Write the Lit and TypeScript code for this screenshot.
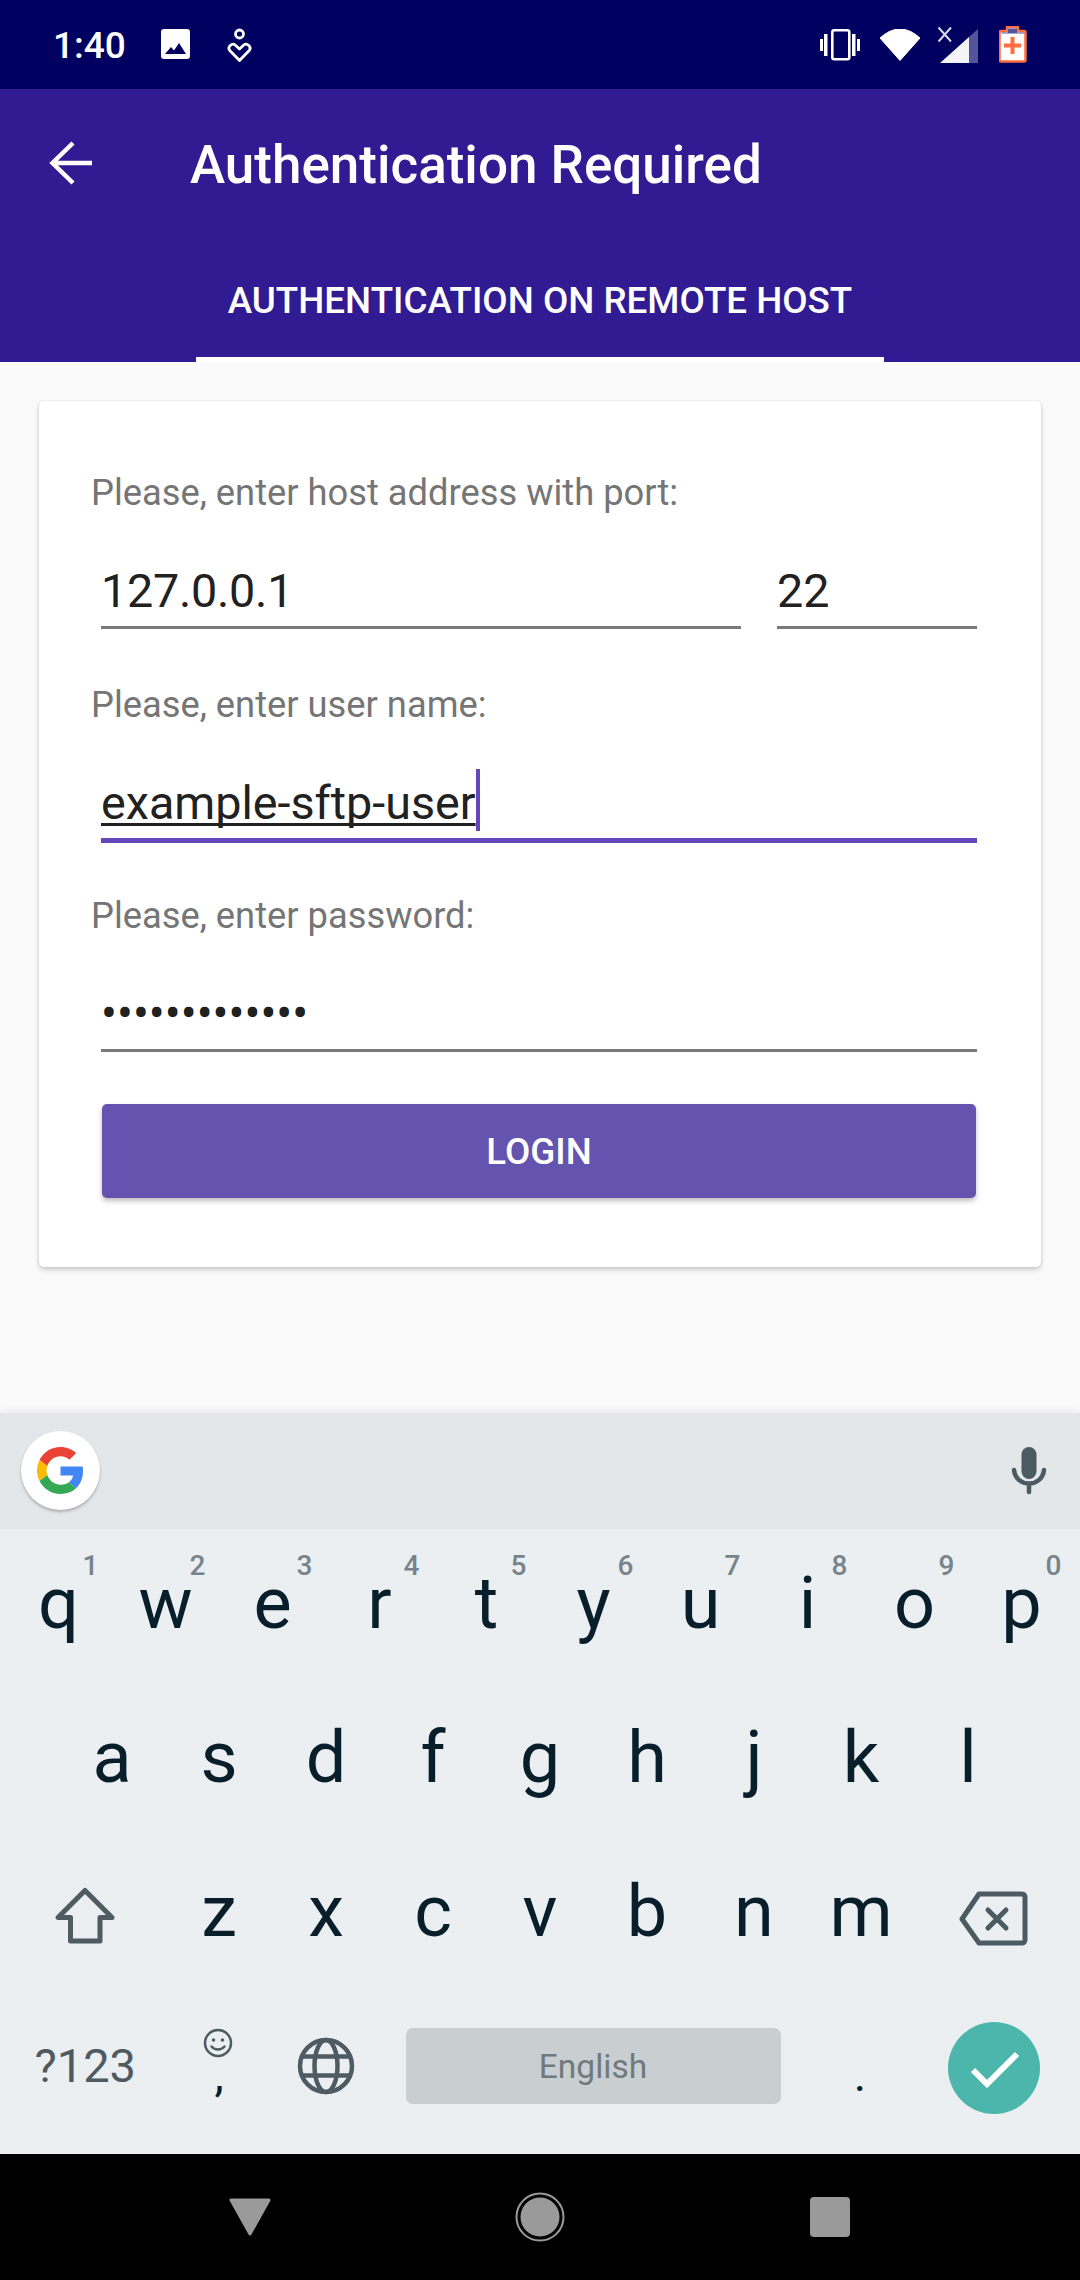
import { LitElement, css, html } from "lit";
import { customElement } from "lit/decorators.js";

const ROW_ONE = ["q", "w", "e", "r", "t", "y", "u", "i", "o", "p"];
const HINTS = ["1", "2", "3", "4", "5", "6", "7", "8", "9", "0"];
const ROW_TWO = ["a", "s", "d", "f", "g", "h", "j", "k", "l"];
const ROW_THREE = ["z", "x", "c", "v", "b", "n", "m"];

/**
 * Login screen with the on-screen keyboard below it.
 */
@customElement("app-root")
class AppRoot extends LitElement {
    public static styles = css`
        :host {
            display: flex;
            flex-direction: column;
            width: 1080px;
            height: 2280px;
            overflow: hidden;
            font-family: Roboto, "Liberation Sans", sans-serif;
            background: #fafafa;
        }

        * {
            box-sizing: border-box;
        }

        svg {
            display: block;
            flex: none;
        }

        .status {
            height: 89px;
            flex: none;
            display: flex;
            align-items: center;
            padding: 0 53px 0 53px;
            background: #000060;
            color: #fff;
        }

        .time {
            font-size: 37px;
            font-weight: 500;
            line-height: 89px;
            margin-right: 35px;
            position: relative;
            top: 1px;
        }

        .status .gap-left {
            margin-right: 37px;
            margin-bottom: 1px;
        }

        .status-right {
            margin-left: auto;
            display: flex;
            align-items: center;
        }

        .appbar {
            height: 273px;
            flex: none;
            background: #311b92;
            color: #fff;
            display: flex;
            flex-direction: column;
        }

        .toolbar {
            height: 147px;
            display: flex;
            align-items: center;
            padding-left: 48px;
        }

        .title {
            font-size: 53px;
            font-weight: 500;
            margin-left: 98px;
            padding-top: 6px;
            line-height: 147px;
        }

        .tab {
            width: 688px;
            height: 126px;
            margin: 0 auto;
            border-bottom: 5px solid #fff;
            text-align: center;
            font-size: 36.75px;
            font-weight: 500;
            line-height: 130px;
        }

        .main {
            height: 1051px;
            flex: none;
            padding: 39px 39px 0;
        }

        .card {
            background: #fff;
            border-radius: 5px;
            box-shadow: 0 3px 5px rgba(0, 0, 0, 0.18), 0 0 3px rgba(0, 0, 0, 0.1);
            padding: 66px 64px 69px 62px;
        }

        .label {
            font-size: 36.3px;
            line-height: 52px;
            color: #757575;
            margin-left: -10px;
        }

        .label + .row,
        .label + .field {
            margin-top: 42px;
        }

        .row {
            display: flex;
            gap: 36px;
        }

        .field {
            height: 68px;
            flex: none;
            font-size: 46.7px;
            line-height: 60px;
            color: #212121;
            border-bottom: 3px solid #7a7a7a;
            padding-bottom: 5px;
            margin-bottom: 50px;
        }

        .row .field {
            margin-bottom: 50px;
        }

        .host {
            width: 640px;
            letter-spacing: -0.25px;
        }

        .port {
            width: 200px;
        }

        .active {
            height: 70px;
            border-bottom: 5px solid #6246ba;
            margin-bottom: 47px;
        }

        .composing {
            position: relative;
            display: inline-block;
            text-decoration: underline;
            text-decoration-thickness: 3px;
            text-underline-offset: 4px;
            text-decoration-skip-ink: none;
        }

        .cursor {
            position: absolute;
            left: 100%;
            top: -4px;
            width: 4px;
            height: 62px;
            background: #6246ba;
        }

        .password {
            font-size: 47.25px;
            margin-bottom: 52px;
        }

        .login {
            height: 94px;
            margin: 0 1px;
            border-radius: 5px;
            background: #6454b0;
            box-shadow: 0 3px 5px rgba(0, 0, 0, 0.25);
            color: #fff;
            font-size: 36.75px;
            font-weight: 500;
            line-height: 96px;
            text-align: center;
        }

        .keyboard {
            height: 741px;
            flex: none;
            position: relative;
            background: #ebeff2;
            box-shadow: 0 -2px 8px rgba(0, 0, 0, 0.07);
        }

        .suggest {
            height: 116px;
            display: flex;
            align-items: center;
            justify-content: space-between;
            padding: 0 32px 0 21px;
            background: #e3e7ea;
        }

        .google {
            width: 79px;
            height: 79px;
            margin-bottom: 2px;
            border-radius: 50%;
            background: #fff;
            box-shadow: 0 2px 3px rgba(0, 0, 0, 0.25);
            display: flex;
            align-items: center;
            justify-content: center;
        }

        .keys {
            display: grid;
            grid-auto-rows: 154px;
            padding: 0 5px;
        }

        .key-row {
            display: grid;
            grid-template-rows: 154px;
            grid-auto-flow: column;
            grid-auto-columns: 107px;
        }

        .indent {
            padding-left: 53.5px;
        }

        .bottom {
            grid-template-columns: 160.5px 107px 107px 427px 107px 160.5px;
            grid-auto-columns: auto;
        }

        .third {
            grid-template-columns: 160.5px repeat(7, 107px) 160.5px;
            grid-auto-columns: auto;
        }

        .key {
            position: relative;
            display: flex;
            align-items: flex-start;
            justify-content: center;
            font-size: 72px;
            line-height: 150px;
            color: #081f2b;
        }

        .hint {
            position: absolute;
            left: calc(50% + 32px);
            top: 23px;
            transform: translateX(-50%);
            font-size: 28px;
            font-weight: 500;
            line-height: 28px;
            color: #78848b;
        }

        .icon-key {
            align-items: center;
        }

        .shift-key {
            padding-top: 4px;
        }

        .delete-key {
            padding: 10px 2px 0 0;
        }

        .globe-key {
            padding-bottom: 4px;
        }

        .symbols {
            font-size: 47px;
            color: #4f5b62;
        }

        .punct {
            font-size: 47px;
            line-height: 168px;
        }

        .smile {
            position: absolute;
            left: 50%;
            top: 37px;
            margin-left: -16px;
        }

        .space-bar {
            width: 375px;
            height: 76px;
            margin-top: 37px;
            border-radius: 7px;
            background: #c9ced1;
            color: #6f7a80;
            font-size: 33.5px;
            line-height: 78px;
            text-align: center;
        }

        .nav {
            height: 126px;
            flex: none;
            background: #000;
            display: grid;
            grid-template-columns: repeat(3, 290px);
            justify-content: center;
            align-items: center;
            justify-items: center;
        }
    `;

    private renderStatusBar() {
        return html`
            <div class="status">
                <span class="time">1:40</span>
                <svg class="gap-left" width="29" height="30" viewBox="161 29 29 30">
                    <path d="M164 29h23a3 3 0 0 1 3 3v24a3 3 0 0 1-3 3h-23a3 3 0 0 1-3-3V32a3 3 0 0 1 3-3z" fill="#fff" />
                    <path d="M165 54l6-7 3 3.5 5-7.500 7 11z" fill="#000060" />
                </svg>
                <svg width="25" height="34" viewBox="226 27 25 34" fill="none" stroke="#fff" stroke-width="2.800">
                    <circle cx="238.500" cy="33" r="4" />
                    <path d="M238.500 59.500l-9.500-9.800c-3.200-3.600 2-8.500 5.500-5.500l4 3.800 4-3.800c3.500-3 8.700 1.900 5.500 5.500z" stroke-linejoin="round" />
                </svg>
                <div class="status-right">
                    <svg width="42" height="32" viewBox="820 28 42 32" fill="#fff">
                        <rect x="821" y="38" width="3" height="12" />
                        <rect x="825" y="33" width="3.500" height="22" />
                        <rect x="833.300" y="29.300" width="17" height="29" rx="2" fill="none" stroke="#fff" stroke-width="2.600" />
                        <rect x="853" y="33" width="3.500" height="22" />
                        <rect x="858" y="38" width="3" height="12" />
                    </svg>
                    <svg width="40" height="32" viewBox="881 27 40 32" style="margin-left: 19px">
                        <path d="M881 36Q901 18 921 36L901 58.500Z" fill="#fff" stroke="#fff" stroke-linejoin="round" />
                    </svg>
                    <svg width="43" height="38" viewBox="938 24 43 38" style="margin-left: 17px">
                        <path d="M941 61L970 35V61Z" fill="#f4f4f8" />
                        <path d="M970 35L979 27V61H970Z" fill="#54549a" />
                        <path d="M939.500 25.500L952 39.500M952 25.500L939.500 39.500" stroke="#d8d8e8" stroke-width="2" fill="none" />
                    </svg>
                    <svg width="28" height="37" viewBox="1000 26 28 37" style="margin-left: 19px">
                        <path d="M1008 27h11v4h6a1.500 1.500 0 0 1 1.500 1.500V60a1.500 1.500 0 0 1-1.500 1.500h-23a1.500 1.500 0 0 1-1.500-1.500V32.500A1.500 1.500 0 0 1 1002 31h6z" fill="#fff" stroke="#ff6e40" stroke-width="2.500" />
                        <path d="M1009 28.500h9v4h7.500v1h-23v-1h6.500z" fill="#54549a" />
                        <path d="M1005 45.500h17M1013.500 37v17" stroke="#ff6e40" stroke-width="4" />
                    </svg>
                </div>
            </div>
        `;
    }

    private renderAppBar() {
        return html`
            <div class="appbar">
                <div class="toolbar">
                    <svg width="44" height="44" viewBox="48 140 44 44" fill="none" stroke="#fff" stroke-width="4.500">
                        <path d="M92 162H52M73 142L52.500 162L73 182" />
                    </svg>
                    <div class="title">Authentication Required</div>
                </div>
                <div class="tab">AUTHENTICATION ON REMOTE HOST</div>
            </div>
        `;
    }

    private renderCard() {
        return html`
            <div class="main">
                <div class="card">
                    <div class="label">Please, enter host address with port:</div>
                    <div class="row">
                        <div class="field host">127.0.0.1</div>
                        <div class="field port">22</div>
                    </div>
                    <div class="label">Please, enter user name:</div>
                    <div class="field active">
                        <span class="composing">example-sftp-user<span class="cursor"></span></span>
                    </div>
                    <div class="label">Please, enter password:</div>
                    <div class="field password">•••••••••••••</div>
                    <div class="login">LOGIN</div>
                </div>
            </div>
        `;
    }

    private renderSuggestions() {
        return html`
            <div class="suggest">
                <div class="google">
                    <svg width="47" height="47" viewBox="0 0 48 48">
                        <path fill="#EA4335" d="M24 9.500c3.540 0 6.710 1.220 9.210 3.600l6.850-6.850C35.900 2.380 30.470 0 24 0 14.620 0 6.510 5.380 2.560 13.220l7.980 6.190C12.430 13.720 17.740 9.500 24 9.500z" />
                        <path fill="#4285F4" d="M46.980 24.550c0-1.570-.15-3.090-.38-4.550H24v9.020h12.940c-.58 2.960-2.260 5.480-4.780 7.180l7.730 6c4.510-4.180 7.090-10.360 7.090-17.650z" />
                        <path fill="#FBBC05" d="M10.530 28.590c-.48-1.450-.76-2.990-.76-4.590s.27-3.140.76-4.590l-7.980-6.190C.92 16.460 0 20.120 0 24c0 3.880.92 7.540 2.560 10.780l7.970-6.190z" />
                        <path fill="#34A853" d="M24 48c6.480 0 11.930-2.130 15.890-5.810l-7.730-6c-2.150 1.450-4.920 2.300-8.160 2.300-6.260 0-11.570-4.220-13.470-9.910l-7.980 6.190C6.510 42.620 14.620 48 24 48z" />
                    </svg>
                </div>
                <svg width="38" height="50" viewBox="1010 1446 38 50">
                    <rect x="1021.500" y="1447" width="15" height="32" rx="7.500" fill="#4c5a62" />
                    <path d="M1014 1470c1 9 8 13.500 15 13.500s14-4.500 15-13.500M1029 1484v8" fill="none" stroke="#4c5a62" stroke-width="4.500" stroke-linecap="round" />
                </svg>
            </div>
        `;
    }

    private renderKeys() {
        return html`
            <div class="keys">
                <div class="key-row">
                    ${ROW_ONE.map(
                        (letter, i) => html`<div class="key">${letter}<span class="hint">${HINTS[i]}</span></div>`
                    )}
                </div>
                <div class="key-row indent">${ROW_TWO.map((letter) => html`<div class="key">${letter}</div>`)}</div>
                <div class="key-row third">
                    <div class="key icon-key shift-key">
                        <svg width="62" height="60" viewBox="54 1886 62 60" fill="none" stroke="#4f5b62" stroke-width="5" stroke-linejoin="round">
                            <path d="M85 1890.500L58 1917.500H70.500V1941H100V1917.500H112Z" />
                        </svg>
                    </div>
                    ${ROW_THREE.map((letter) => html`<div class="key">${letter}</div>`)}
                    <div class="key icon-key delete-key">
                        <svg width="70" height="56" viewBox="959 1891 70 56" fill="none" stroke="#4c5a62" stroke-width="5" stroke-linejoin="round" stroke-linecap="round">
                            <path d="M979 1894H1022a3 3 0 0 1 3 3V1940a3 3 0 0 1-3 3H979L962 1919Z" />
                            <path d="M988 1910L1006 1928M1006 1910L988 1928" />
                        </svg>
                    </div>
                </div>
                <div class="key-row bottom">
                    <div class="key symbols">?123</div>
                    <div class="key punct">
                        ,
                        <svg class="smile" width="30" height="30" viewBox="0 0 30 30" fill="none" stroke="#4f5b62" stroke-width="2.500">
                            <circle cx="15" cy="15" r="13" />
                            <circle cx="10.500" cy="12" r="1.800" fill="#4f5b62" stroke="none" />
                            <circle cx="19.500" cy="12" r="1.800" fill="#4f5b62" stroke="none" />
                            <path d="M8.500 18.500c3.500 4 9.500 4 13 0" stroke-linecap="round" />
                        </svg>
                    </div>
                    <div class="key icon-key globe-key">
                        <svg width="58" height="58" viewBox="0 0 58 58" fill="none" stroke="#4f5b62" stroke-width="4.500">
                            <circle cx="29" cy="29" r="26" />
                            <ellipse cx="29" cy="29" rx="11.500" ry="26" />
                            <path d="M5 19.500H53M5 38.500H53" />
                        </svg>
                    </div>
                    <div class="key"><div class="space-bar">English</div></div>
                    <div class="key punct">.</div>
                    <div class="key icon-key">
                        <svg width="92" height="92" viewBox="948 2022 92 92">
                            <circle cx="994" cy="2068" r="46" fill="#4db6ac" />
                            <path d="M973 2070L987 2084L1017 2054" fill="none" stroke="#fff" stroke-width="6" />
                        </svg>
                    </div>
                </div>
            </div>
        `;
    }

    private renderNavBar() {
        return html`
            <div class="nav">
                <svg width="44" height="40" viewBox="0 0 44 40">
                    <path d="M3 3H41L22 37Z" fill="#9a9a9a" stroke="#9a9a9a" stroke-width="3" stroke-linejoin="round" />
                </svg>
                <svg width="50" height="50" viewBox="0 0 50 50">
                    <circle cx="25" cy="25" r="23.500" fill="none" stroke="#9a9a9a" stroke-width="2" />
                    <circle cx="25" cy="25" r="19.500" fill="#9a9a9a" />
                </svg>
                <svg width="40" height="40" viewBox="0 0 40 40">
                    <rect width="40" height="40" rx="4" fill="#9a9a9a" />
                </svg>
            </div>
        `;
    }

    protected render() {
        return html`
            ${this.renderStatusBar()} ${this.renderAppBar()} ${this.renderCard()}
            <div class="keyboard">${this.renderSuggestions()} ${this.renderKeys()}</div>
            ${this.renderNavBar()}
        `;
    }
}

declare global {
    interface HTMLElementTagNameMap {
        "app-root": AppRoot;
    }
}

export { AppRoot };
